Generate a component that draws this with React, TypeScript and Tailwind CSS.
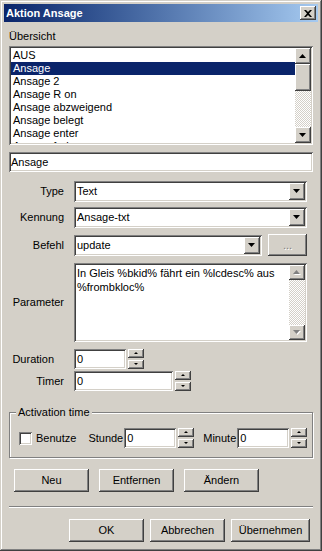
import React from 'react';

const raised =
  'shadow-[inset_-1px_-1px_#404040,inset_1px_1px_#ffffff,inset_-2px_-2px_#808080,inset_2px_2px_#d4d0c8]';
const sunken =
  'shadow-[inset_1px_1px_#808080,inset_-1px_-1px_#ffffff,inset_2px_2px_#404040,inset_-2px_-2px_#d4d0c8]';
const track = 'bg-[image:repeating-conic-gradient(#ffffff_0%_25%,#d4d0c8_0%_50%)] bg-[length:2px_2px]';

type Dir = 'up' | 'down';

const Tri: React.FC<{ dir: Dir; w?: number; h?: number; disabled?: boolean }> = ({ dir, w = 7, h = 4, disabled }) => {
  const pts = dir === 'up' ? `0,${h} ${w},${h} ${w / 2},0` : `0,0 ${w},0 ${w / 2},${h}`;
  return (
    <svg width={w + 1} height={h + 1} viewBox={`0 0 ${w + 1} ${h + 1}`} className="block">
      {disabled && <polygon points={pts} fill="#ffffff" transform="translate(1 1)" />}
      <polygon points={pts} fill={disabled ? '#808080' : '#000000'} />
    </svg>
  );
};

const ScrollBtn: React.FC<{ dir: Dir; disabled?: boolean; className?: string }> = ({ dir, disabled, className = 'h-[16px]' }) => (
  <div className={`${raised} bg-[#d4d0c8] w-[16px] shrink-0 flex items-center justify-center ${className}`}>
    <Tri dir={dir} disabled={disabled} />
  </div>
);

const Spin: React.FC = () => (
  <div className="flex flex-col gap-[2px] ml-[2px]">
    {(['up', 'down'] as Dir[]).map((d) => (
      <div key={d} className={`${raised} bg-[#d4d0c8] w-[16px] h-[9px] flex items-center justify-center`}>
        <Tri dir={d} w={4} h={2} />
      </div>
    ))}
  </div>
);

const Field: React.FC<{ value: string; className: string }> = ({ value, className }) => (
  <div className={`${sunken} bg-white h-[20px] pl-[3px] flex items-center ${className}`}>{value}</div>
);

const Combo: React.FC<{ value: string; className?: string }> = ({ value, className = 'w-[233px]' }) => (
  <div className={`${sunken} bg-white h-[21px] p-[2px] flex ${className}`}>
    <div className="flex-1 pl-[1px] flex items-center">{value}</div>
    <ScrollBtn dir="down" className="h-[17px]" />
  </div>
);

const Button: React.FC<{ label: string; className?: string }> = ({ label, className = 'w-[75px]' }) => (
  <div className={`${raised} bg-[#d4d0c8] h-[23px] flex items-center justify-center ${className}`}>{label}</div>
);

const Row: React.FC<{ label: string; children: React.ReactNode; className?: string; labelPad?: string }> = ({
  label,
  children,
  className = '',
  labelPad = '',
}) => (
  <div className={`flex items-center ${className}`}>
    <div className={`w-[55px] text-right mr-[10px] ${labelPad}`}>{label}</div>
    {children}
  </div>
);

const items = ['AUS', 'Ansage', 'Ansage 2', 'Ansage R on', 'Ansage abzweigend', 'Ansage belegt', 'Ansage enter', 'Ansage frei'];

export default function App() {
  return (
    <div
      className={`w-[322px] h-[551px] bg-[#d4d0c8] p-[4px] overflow-hidden text-[11px] leading-[13px] text-black font-['Liberation_Sans',Arial,sans-serif] shadow-[inset_-1px_-1px_#404040,inset_1px_1px_#d4d0c8,inset_-2px_-2px_#808080,inset_2px_2px_#ffffff]`}
    >
      {/* Title bar */}
      <div className="h-[18px] bg-linear-to-r from-[#0a246a] to-[#a6caf0] flex items-center justify-between pl-[2px] pr-[2px]">
        <span className="text-white font-bold">Aktion Ansage</span>
        <div className={`${raised} bg-[#d4d0c8] w-[16px] h-[14px] flex items-center justify-center`}>
          <svg width="8" height="7" viewBox="0 0 8 7" className="block">
            <path d="M0 0h2l2 2 2-2h2L5 3.5 8 7H6L4 5 2 7H0l3-3.5z" fill="#000" />
          </svg>
        </div>
      </div>

      <div className="px-[5px]">
        <div className="mt-[8px] h-[13px] mb-[3px]">Übersicht</div>

        {/* List box */}
        <div className={`${sunken} bg-white h-[99px] p-[2px] flex`}>
          <div className="flex-1 overflow-hidden pt-[1px]">
            {items.map((it, i) => (
              <div key={it} className={`h-[13px] pl-[2px] ${i === 1 ? 'bg-[#0a246a] text-white' : ''}`}>
                {it}
              </div>
            ))}
          </div>
          <div className="w-[16px] flex flex-col">
            <ScrollBtn dir="up" />
            <div className={`${raised} bg-[#d4d0c8] h-[27px]`} />
            <div className={`flex-1 ${track}`} />
            <ScrollBtn dir="down" />
          </div>
        </div>

        <Field value="Ansage" className="mt-[7px] w-full !pl-[2px]" />

        <Row label="Type" className="mt-[9px]">
          <Combo value="Text" />
        </Row>
        <Row label="Kennung" className="mt-[5px]">
          <Combo value="Ansage-txt" />
        </Row>
        <Row label="Befehl" className="mt-[6px]">
          <Combo value="update" className="w-[188px]" />
          <div
            className={`${raised} bg-[#d4d0c8] w-[39px] h-[22px] ml-[6px] flex items-center justify-center text-[#808080] [text-shadow:1px_1px_0_#ffffff]`}
          >
            ...
          </div>
        </Row>
        <Row label="Parameter" className="mt-[7px]">
          <div className={`${sunken} bg-white w-[233px] h-[79px] p-[2px] flex`}>
            <div className="flex-1 pl-[1px] pt-[1px] leading-[14px]">
              In Gleis %bkid% fährt ein %lcdesc% aus %frombkloc%
            </div>
            <div className="w-[16px] flex flex-col">
              <ScrollBtn dir="up" disabled className="h-[15px]" />
              <div className={`flex-1 ${track}`} />
              <ScrollBtn dir="down" disabled className="h-[15px]" />
            </div>
          </div>
        </Row>
        <Row label="Duration" className="mt-[7px]" labelPad="pr-[10px]">
          <Field value="0" className="w-[52px]" />
          <Spin />
        </Row>
        <Row label="Timer" className="mt-[2px]">
          <Field value="0" className="w-[99px]" />
          <Spin />
        </Row>

        {/* Activation time group */}
        <div className="relative mt-[21px] h-[46px] border border-[#808080] shadow-[inset_1px_1px_#ffffff,1px_1px_#ffffff] pt-[15px] pl-[9px]">
          <div className="absolute -top-[7px] left-[6px] px-[2px] bg-[#d4d0c8]">Activation time</div>
          <div className="flex items-center">
            <div className={`${sunken} bg-white w-[13px] h-[13px]`} />
            <span className="ml-[4px]">Benutze</span>
            <span className="ml-[12px] mr-[1px]">Stunde</span>
            <Field value="0" className="w-[52px]" />
            <Spin />
            <span className="ml-[9px] mr-[1px]">Minute</span>
            <Field value="0" className="w-[52px]" />
            <Spin />
          </div>
        </div>

        <div className="flex gap-[10px] mt-[11px] ml-[5px]">
          <Button label="Neu" />
          <Button label="Entfernen" />
          <Button label="Ändern" />
        </div>

        <div className="mt-[14px] h-[2px] border-t border-[#808080] border-b border-b-white" />

        <div className="flex justify-end gap-[6px] mt-[11px] mr-[3px]">
          <Button label="OK" />
          <Button label="Abbrechen" />
          <Button label="Übernehmen" className="w-[79px]" />
        </div>
      </div>
    </div>
  );
}
